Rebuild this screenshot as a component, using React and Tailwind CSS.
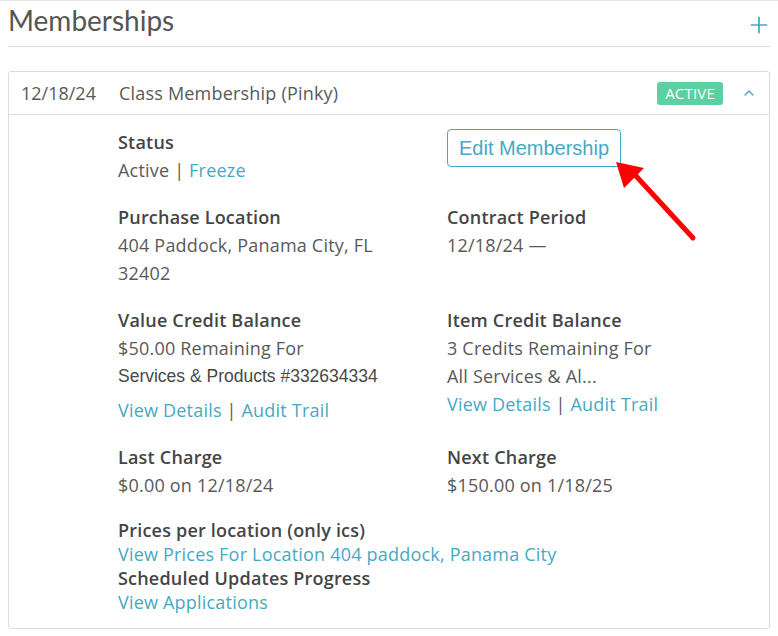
import { Plus, ChevronUp } from "lucide-react"

const link = "text-[#45a9c3]"

const Field = ({ label, children }) => (
  <div>
    <p className="font-semibold text-[#454545]">{label}</p>
    {children}
  </div>
)

const Links = ({ className = "" }) => (
  <p className={className}>
    <span className={link}>View Details</span> | <span className={link}>Audit Trail</span>
  </p>
)

export default function App() {
  return (
    <div
      className="relative w-[778px] h-[636px] bg-white border-t border-[#e6e6e6] text-[#595959] overflow-hidden"
      style={{ fontFamily: "'Open Sans', Lato, sans-serif" }}
    >
      <div className="mx-2 flex items-center justify-between h-[46px] border-b border-[#dcdcdc]">
        <h1 className="text-[28px] leading-none pb-[8px] text-[#555]" style={{ fontFamily: "Lato, sans-serif" }}>
          Memberships
        </h1>
        <Plus className="w-[26px] h-[26px] text-[#45a9c3] -mr-[2px] mt-[2px]" strokeWidth={1.6} />
      </div>

      <div className="mx-2 mt-[24px] border border-[#dcdcdc] rounded-[3px] text-[18px] tracking-[0.2px]">
        <div className="flex items-center h-[43px] border-b border-[#dcdcdc] px-3">
          <span className="w-[98px] tracking-normal">12/18/24</span>
          <span className="flex-1">Class Membership (Pinky)</span>
          <span className="bg-[#5dcfa0] text-white text-[15px] leading-none px-[8px] py-[4px] rounded-[3px]">
            ACTIVE
          </span>
          <ChevronUp className="w-[16px] h-[16px] ml-[18px] text-[#45a9c3]" strokeWidth={2} />
        </div>

        <div className="pl-[109px] pt-[13px] pb-[14px] leading-[28px]">
          <div className="grid grid-cols-[329px_1fr] gap-y-[19px]">
            <Field label="Status">
              <p>
                Active | <span className={link}>Freeze</span>
              </p>
            </Field>
            <div>
              <button
                className="mt-[1px] h-[38px] px-[11px] border border-[#45a9c3] rounded-[4px] text-[#45a9c3] text-[20px] tracking-normal"
                style={{ fontFamily: "'Liberation Sans', Arial, sans-serif" }}
              >
                Edit Membership
              </button>
            </div>

            <Field label="Purchase Location">
              <p className="w-[290px]">404 Paddock, Panama City, FL 32402</p>
            </Field>
            <Field label="Contract Period">
              <p>12/18/24 —</p>
            </Field>

            <Field label="Value Credit Balance">
              <p>$50.00 Remaining For</p>
              <p
                className="text-[#484848] text-[17.5px] tracking-normal"
                style={{ fontFamily: "'Liberation Sans', Arial, sans-serif" }}
              >
                Services &amp; Products #332634334
              </p>
              <Links className="mt-[6px]" />
            </Field>
            <Field label="Item Credit Balance">
              <p>3 Credits Remaining For</p>
              <p>All Services &amp; Al...</p>
              <Links />
            </Field>

            <Field label="Last Charge">
              <p>$0.00 on 12/18/24</p>
            </Field>
            <Field label="Next Charge">
              <p>$150.00 on 1/18/25</p>
            </Field>
          </div>

          <div className="mt-[19px] leading-[24px]">
            <p className="font-semibold text-[#454545]">Prices per location (only ics)</p>
            <p className={link}>View Prices For Location 404 paddock, Panama City</p>
            <p className="font-semibold text-[#454545]">Scheduled Updates Progress</p>
            <p className={link}>View Applications</p>
          </div>
        </div>
      </div>

      <svg className="absolute left-[610px] top-[155px]" width="95" height="90" viewBox="0 0 95 90">
        <line x1="83" y1="82" x2="26" y2="20" stroke="#ff0000" strokeWidth="5" strokeLinecap="round" />
        <polygon points="6,6 34,12 14,32" fill="#ff0000" />
      </svg>
    </div>
  )
}
